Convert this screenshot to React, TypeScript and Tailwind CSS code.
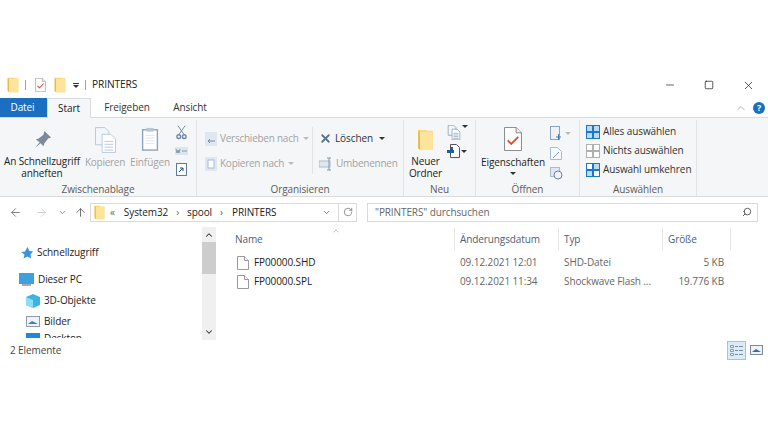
import React from 'react';
import { ChevronDown, ChevronUp, ArrowLeft, ArrowRight, ArrowUp, RotateCw, Search, Minus, Square, X } from 'lucide-react';

const Folder = ({ className = '' }: { className?: string }) => (
  <svg viewBox="0 0 18 24" className={className}>
    <path d="M1 1h8l2 1h6v21H3l-2-2z" fill="#fbd777" />
    <path d="M3 3h14v20H3z" fill="#fce49a" />
    <path d="M1 1v20l2 2V3z" fill="#e9bb4c" />
  </svg>
);

const CheckDoc = ({ className = '' }: { className?: string }) => (
  <svg viewBox="0 0 20 27" className={className}>
    <path d="M.5.5h13l6 6v20H.5z" fill="#fff" stroke="#7a7a7a" />
    <path d="M13.500.5v6h6" fill="#eee" stroke="#7a7a7a" />
    <path d="M4 15l4 4 8-8" fill="none" stroke="#e0492f" strokeWidth="2" />
  </svg>
);

const FileIcon = () => (
  <svg viewBox="0 0 12 14" className="w-[12px] h-[14px] shrink-0">
    <path d="M.5.500h7l4 4v9H.5z" fill="#fff" stroke="#9a9a9a" />
    <path d="M7.500.5v4h4" fill="#f0f0f0" stroke="#9a9a9a" />
  </svg>
);

const Pages = ({ className = '', c = '#b7c8de' }: { className?: string; c?: string }) => (
  <svg viewBox="0 0 22 27" className={className}>
    <path d="M.5.500h10l4 4v14H.5z" fill="#f2f5f9" stroke={c} />
    <path d="M7.500 7.500h9l5 5v14h-14z" fill="#fff" stroke={c} />
    <path d="M10 15h9M10 18h9M10 21h9M10 24h9" stroke={c} />
  </svg>
);

const Grid4 = ({ fill, stroke }: { fill: string[]; stroke: string }) => (
  <svg viewBox="0 0 14 14" className="w-[14px] h-[14px] shrink-0">
    {[[0.5, 0.5], [7.5, 0.5], [0.5, 7.5], [7.5, 7.5]].map(([x, y], i) => (
      <rect key={i} x={x} y={y} width="6" height="6" fill={fill[i]} stroke={stroke} strokeWidth="1" />
    ))}
  </svg>
);

const SmallCaret = ({ className = 'border-t-[#333]' }: { className?: string }) => (
  <span className={`block w-0 h-0 border-x-[3px] border-x-transparent border-t-[3px] ${className}`} />
);

const Group = ({ label, width, children }: { label: string; width: string; children: React.ReactNode }) => (
  <div className={`${width} shrink-0 flex flex-col border-r border-[#e1e3e6] mt-[2px]`}>
    <div className="flex-1 flex min-h-0">{children}</div>
    <div className="h-[14px] leading-[14px] text-center text-[#5c5c5c]">{label}</div>
  </div>
);

const SmallRow = ({ icon, label, muted, caret }: { icon: React.ReactNode; label: string; muted?: boolean; caret?: React.ReactNode }) => (
  <div className={`flex items-center gap-[3px] h-[19px] whitespace-nowrap ${muted ? 'text-[#a3a3a3] tracking-[-0.25px]' : 'text-[#333]'}`}>
    {icon}
    <span>{label}</span>
    {caret}
  </div>
);

export default function App() {
  return (
    <div className="w-[768px] h-[432px] overflow-hidden bg-white pt-[75px] text-[10px] text-[#222] font-['Open_Sans','Noto_Sans',sans-serif] tracking-[-0.1px]">
      {/* title bar */}
      <div className="flex items-center h-[20px] pl-[7px]">
        <Folder className="w-[12px] h-[16px]" />
        <div className="w-px h-[10px] bg-[#a0a0a0] ml-[6px] mr-[9px]" />
        <CheckDoc className="w-[11px] h-[14px]" />
        <Folder className="w-[12px] h-[16px] ml-[8px]" />
        <div className="ml-[7px] flex flex-col items-center gap-[1px]">
          <div className="w-[6px] h-px bg-[#333]" />
          <SmallCaret />
        </div>
        <div className="w-px h-[10px] bg-[#a0a0a0] ml-[6px] mr-[6px]" />
        <span className="text-[10.200px] text-[#222]">PRINTERS</span>
        <div className="ml-auto flex items-center gap-[28px] pr-[13px] text-[#222]">
          <Minus className="w-[12px] h-[12px]" strokeWidth={1.4} />
          <Square className="w-[10px] h-[10px]" strokeWidth={1.8} />
          <X className="w-[13px] h-[13px]" strokeWidth={1.4} />
        </div>
      </div>
      {/* tabs */}
      <div className="flex items-end h-[20px] mt-[2px] relative">
        <div className="w-[47px] h-[19px] bg-[#1a6fc0] text-white flex items-center justify-center pr-[2px]">Datei</div>
        <div className="w-[44px] h-[20px] bg-[#f5f6f7] border-x border-t border-[#dadbdc] flex items-center justify-center -mb-px relative">Start</div>
        <div className="w-[58px] h-[19px] flex items-center justify-center ml-[7px] text-[#333]">Freigeben</div>
        <div className="w-[46px] h-[19px] flex items-center justify-center ml-[11px] text-[#333]">Ansicht</div>
        <div className="ml-auto flex items-center gap-[6px] pr-[3px] h-[19px]">
          <ChevronUp className="w-[12px] h-[12px] text-[#999]" strokeWidth={1.5} />
          <div className="w-[12px] h-[12px] rounded-full bg-[#1a6fc0] text-white text-[9px] font-bold flex items-center justify-center">?</div>
        </div>
      </div>
      {/* ribbon */}
      <div className="flex h-[80px] bg-[#f5f6f7] border-t border-b border-[#dadbdc]">
        <Group label="Zwischenablage" width="w-[197px]">
          <div className="w-[84px] flex flex-col items-center pt-[10px]">
            <svg viewBox="0 0 20 20" className="w-[19px] h-[19px] mb-[6px]">
              <path d="M12 1l7 7-3 1-4 5-1 3-3-3-6 5 5-6-4-3 3-1 5-4z" fill="#7d8a99" />
            </svg>
            <div className="text-center leading-[12px] whitespace-nowrap">An Schnellzugriff<br />anheften</div>
          </div>
          <div className="w-[42px] flex flex-col items-center pt-[7px] text-[#a3a3a3] tracking-[-0.25px]">
            <Pages className="w-[21px] h-[26px] mb-[3px]" />
            <span className="leading-[12px]">Kopieren</span>
          </div>
          <div className="w-[48px] flex flex-col items-center pt-[7px] text-[#a3a3a3]">
            <svg viewBox="0 0 18 26" className="w-[18px] h-[24px] mb-[5px]">
              <rect x="1" y="3" width="16" height="22" fill="#fff" stroke="#8da3bd" strokeWidth="1.500" />
              <rect x="5" y="1" width="8" height="4" fill="#b8c6d6" />
              <path d="M4 9h10M4 12h10M4 15h10M4 18h10" stroke="#dce3ec" />
            </svg>
            <span className="leading-[12px]">Einfügen</span>
          </div>
          <div className="flex flex-col items-center gap-[7px] pt-[5px] pl-[1px]">
            <svg viewBox="0 0 12 15" className="w-[11px] h-[15px]" fill="none" stroke="#6f86a3">
              <path d="M2 0l7 10M10 0L3 10" />
              <circle cx="3" cy="12" r="2" strokeWidth="1.500" />
              <circle cx="9" cy="12" r="2" strokeWidth="1.500" />
            </svg>
            <svg viewBox="0 0 13 8" className="w-[13px] h-[8px]">
              <rect width="13" height="8" fill="#dbe5f0" />
              <path d="M1 2l1 4 1-3 1 3 1-4M7 4h5" fill="none" stroke="#6f86a3" strokeWidth=".8" />
            </svg>
            <svg viewBox="0 0 11 14" className="w-[11px] h-[14px]">
              <rect x=".5" y="1.500" width="10" height="12" fill="#fff" stroke="#607a9c" />
              <path d="M3 10l4-4M4 6h3v3" fill="none" stroke="#1d4f86" />
            </svg>
          </div>
        </Group>
        <Group label="Organisieren" width="w-[207px]">
          <div className="w-[115px] flex flex-col gap-[6px] pl-[8px] pt-[9px]">
            <SmallRow muted label="Verschieben nach" caret={<span className="ml-[1px]"><SmallCaret className="border-t-[#bbb]" /></span>} icon={<svg viewBox="0 0 12 14" className="w-[12px] h-[14px]"><rect width="12" height="14" fill="#dfe7f0" /><path d="M10 9H3M5 7L3 9l2 2" fill="none" stroke="#6b8db5" /></svg>} />
            <SmallRow muted label="Kopieren nach" caret={<span className="ml-[1px]"><SmallCaret className="border-t-[#bbb]" /></span>} icon={<svg viewBox="0 0 12 14" className="w-[12px] h-[14px]"><rect width="12" height="14" fill="#dfe7f0" /><rect x="3" y="3" width="6" height="8" fill="#fff" stroke="#a9bbd0" /></svg>} />
          </div>
          <div className="w-px h-[47px] bg-[#e1e3e6] mt-[7px]" />
          <div className="flex flex-col gap-[6px] pl-[6px] pt-[9px]">
            <SmallRow muted={false} label="Löschen" caret={<span className="ml-[3px]"><SmallCaret /></span>} icon={<X className="w-[13px] h-[13px] text-[#5a7596]" strokeWidth={3.500} />} />
            <SmallRow muted label="Umbenennen" icon={<svg viewBox="0 0 14 14" className="w-[14px] h-[14px]"><rect x="0" y="4" width="11" height="6" fill="#dfe7f0" stroke="#a9bbd0" /><path d="M10 1v12M8 1h4M8 13h4" stroke="#8297b0" fill="none" /></svg>} />
          </div>
        </Group>
        <Group label="Neu" width="w-[72px]">
          <div className="w-[43px] flex flex-col items-center pt-[9px]">
            <Folder className="w-[17px] h-[22px] mb-[4px]" />
            <div className="text-center leading-[12px]">Neuer<br />Ordner</div>
          </div>
          <div className="flex flex-col gap-[4px] pt-[5px]">
            <div className="flex items-start gap-[1px]">
              <Pages className="w-[14px] h-[15px]" c="#5d7ea3" />
              <SmallCaret />
            </div>
            <div className="flex items-center gap-[1px]">
              <svg viewBox="0 0 13 14" className="w-[13px] h-[14px]"><path d="M3.500.5h6l3 3v10h-9z" fill="#fff" stroke="#555" /><path d="M0 6h7v3H0z" fill="#1d5fa6" /><path d="M5 3v6" stroke="#1d5fa6" strokeWidth="2" /></svg>
              <SmallCaret />
            </div>
          </div>
        </Group>
        <Group label="Öffnen" width="w-[104px]">
          <div className="w-[74px] flex flex-col items-center pt-[7px]">
            <CheckDoc className="w-[18px] h-[24px] mb-[5px]" />
            <span className="leading-[12px]">Eigenschaften</span>
            <span className="mt-[4px]"><SmallCaret /></span>
          </div>
          <div className="flex flex-col gap-[7px] pt-[6px] text-[#93a7c0]">
            <div className="flex items-center gap-[3px]">
              <svg viewBox="0 0 12 14" className="w-[12px] h-[14px]"><rect x=".5" y=".5" width="9" height="13" fill="#eef2f7" stroke="#8ba3c0" /><path d="M6 11h5M8.500 8v6" stroke="#3d7fbe" /></svg>
              <SmallCaret className="border-t-[#bbb]" />
            </div>
            <svg viewBox="0 0 12 13" className="w-[12px] h-[13px]"><path d="M.5.500h7l4 4v8H.5z" fill="#f7f9fb" stroke="#a9bbd0" /><path d="M3 11l6-6" stroke="#7d9cbf" /></svg>
            <svg viewBox="0 0 13 13" className="w-[13px] h-[13px]"><rect x=".5" y=".5" width="9" height="9" fill="#dfe7f0" stroke="#a9bbd0" /><circle cx="8" cy="8" r="4" fill="#eef2f7" stroke="#6f86a3" /></svg>
          </div>
        </Group>
        <Group label="Auswählen" width="w-[117px]">
          <div className="flex flex-col pl-[6px] pt-[2px]">
            <SmallRow label="Alles auswählen" icon={<Grid4 fill={['#bcd9f5', '#bcd9f5', '#bcd9f5', '#bcd9f5']} stroke="#1a78c8" />} />
            <SmallRow label="Nichts auswählen" icon={<Grid4 fill={['#fff', '#fff', '#fff', '#fff']} stroke="#b0b0b0" />} />
            <SmallRow label="Auswahl umkehren" icon={<Grid4 fill={['#fff', '#bcd9f5', '#bcd9f5', '#fff']} stroke="#1a78c8" />} />
          </div>
        </Group>
      </div>
      {/* address bar */}
      <div className="flex items-center h-[20px] mt-[5px] pl-[9px] pr-[10px]">
        <ArrowLeft className="w-[13px] h-[13px] text-[#666]" strokeWidth={1.500} />
        <ArrowRight className="w-[13px] h-[13px] text-[#ccc] ml-[13px]" strokeWidth={1.500} />
        <ChevronDown className="w-[9px] h-[9px] text-[#777] ml-[10px]" strokeWidth={2} />
        <ArrowUp className="w-[13px] h-[13px] text-[#555] ml-[7px]" strokeWidth={1.500} />
        <div className="flex items-center h-[19px] w-[267px] ml-[3px] border border-[#d9d9d9] text-[#222]">
          <Folder className="w-[11px] h-[15px] ml-[3px]" />
          <span className="ml-[5px] text-[#666]">«</span>
          <span className="ml-[9px]">System32</span>
          <span className="ml-[8px] text-[#666]">›</span>
          <span className="ml-[8px]">spool</span>
          <span className="ml-[8px] text-[#666]">›</span>
          <span className="ml-[9px]">PRINTERS</span>
          <ChevronDown className="w-[9px] h-[9px] text-[#555] ml-auto mr-[7px]" strokeWidth={2} />
          <div className="h-full w-[18px] border-l border-[#d9d9d9] flex items-center justify-center">
            <RotateCw className="w-[10px] h-[10px] text-[#555]" strokeWidth={1.500} />
          </div>
        </div>
        <div className="flex items-center h-[19px] flex-1 ml-[10px] border border-[#d9d9d9] pl-[7px] pr-[5px] text-[#666]">
          <span>"PRINTERS" durchsuchen</span>
          <Search className="w-[10px] h-[10px] ml-auto text-[#444] -scale-x-100" strokeWidth={2} />
        </div>
      </div>
      {/* content */}
      <div className="flex h-[113px] mt-[6px]">
        <div className="w-[202px] shrink-0 pl-[19px] pt-[11px] overflow-hidden flex flex-col">
          <div className="flex items-center gap-[4px] h-[21px] mt-[3px] ml-[2px]">
            <svg viewBox="0 0 12 12" className="w-[12px] h-[12px]"><path d="M6.500 0l2 4 3.500.500-2.500 3 .5 4-3.500-2-4 2 1-4L0 5l4-.5z" fill="#3b93dd" /></svg>
            <span>Schnellzugriff</span>
          </div>
          <div className="flex items-center gap-[4px] h-[21px] mt-[6px]">
            <svg viewBox="0 0 15 13" className="w-[15px] h-[13px]"><rect width="15" height="10" fill="#3fa0e0" /><rect y="10" width="15" height="1" fill="#888" /><rect x="3" y="11" width="9" height="2" fill="#aaa" /></svg>
            <span>Dieser PC</span>
          </div>
          <div className="flex items-center gap-[4px] h-[21px] ml-[7px]">
            <svg viewBox="0 0 14 14" className="w-[14px] h-[14px]"><path d="M7 0l7 3v8l-7 3-7-3V3z" fill="#37b6e6" /><path d="M0 3l7 3v8l-7-3z" fill="#8edcf5" /></svg>
            <span>3D-Objekte</span>
          </div>
          <div className="flex items-center gap-[4px] h-[21px] ml-[7px]">
            <svg viewBox="0 0 14 11" className="w-[14px] h-[11px]"><rect x=".5" y=".5" width="13" height="10" fill="#eef2f7" stroke="#8b9bab" /><path d="M2 8l4-3 6 3z" fill="#3a7fb8" /></svg>
            <span>Bilder</span>
          </div>
          <div className="flex items-start gap-[4px] h-[5px] ml-[7px] overflow-hidden mt-[1px]">
            <div className="w-[14px] h-[10px] bg-[#1e88d6] shrink-0" />
            <span className="leading-[10px]">Desktop</span>
          </div>
        </div>
        <div className="w-[14px] h-full bg-[#f0f0f0] flex flex-col items-center justify-between shrink-0 relative -mt-[1px]">
          <ChevronUp className="w-[10px] h-[10px] mt-[3px] text-[#333]" strokeWidth={2.500} />
          <div className="absolute top-[15px] left-0 w-full h-[32px] bg-[#cdcdcd]" />
          <ChevronDown className="w-[10px] h-[10px] mb-[3px] text-[#333]" strokeWidth={2.500} />
        </div>
        <div className="flex-1 min-w-0 pl-[19px]">
          <div className="flex h-[22px] items-center text-[#4c607a] relative">
            <div className="w-[219px]">Name</div>
            <ChevronUp className="absolute left-[96px] -top-[1px] w-[10px] h-[8px] text-[#888]" strokeWidth={1.500} />
            <div className="w-[104px] h-full border-l border-[#e5e5e5] pl-[5px] flex items-center">Änderungsdatum</div>
            <div className="w-[104px] h-full border-l border-[#e5e5e5] pl-[5px] flex items-center">Typ</div>
            <div className="w-[69px] h-full border-x border-[#e5e5e5] pl-[5px] flex items-center">Größe</div>
          </div>
          <div className="mt-[3px] text-[#666]">
            {[
              ['FP00000.SHD', '09.12.2021 12:01', 'SHD-Datei', '5 KB'],
              ['FP00000.SPL', '09.12.2021 11:34', 'Shockwave Flash ...', '19.776 KB'],
            ].map(([name, date, type, size]) => (
              <div key={name} className="flex h-[19px] items-center">
                <div className="w-[219px] flex items-center gap-[5px] text-[#222] pl-[2px]">
                  <FileIcon />
                  <span>{name}</span>
                </div>
                <div className="w-[104px] pl-[6px]">{date}</div>
                <div className="w-[104px] pl-[6px] whitespace-nowrap">{type}</div>
                <div className="w-[69px] text-right pr-[7px]">{size}</div>
              </div>
            ))}
          </div>
        </div>
      </div>
      {/* status bar */}
      <div className="flex items-center h-[20px] -mt-[1px] pl-[10px] pr-[5px] text-[#444]">
        <span>2 Elemente</span>
        <div className="ml-auto flex items-center gap-[4px]">
          <div className="w-[19px] h-[19px] bg-[#d9ecfa] border border-[#8ccbf0] flex items-center justify-center">
            <svg viewBox="0 0 15 13" className="w-[15px] h-[13px]">
              <path d="M1.500 1.500h3v2h-3zM1.500 5.500h3v2h-3zM1.500 9.500h3v2h-3z" fill="#f5f8fb" stroke="#8b9bab" />
              <path d="M6 2.500h3M10 2.500h4M6 6.500h3M10 6.500h4M6 10.500h3M10 10.500h4" stroke="#7b8a99" />
            </svg>
          </div>
          <svg viewBox="0 0 13 10" className="w-[13px] h-[10px]"><rect x=".5" y=".5" width="12" height="9" fill="#eef2f7" stroke="#7b8a99" /><path d="M2 7l4-3 5 3z" fill="#2f6fa6" /></svg>
        </div>
      </div>
    </div>
  );
}
